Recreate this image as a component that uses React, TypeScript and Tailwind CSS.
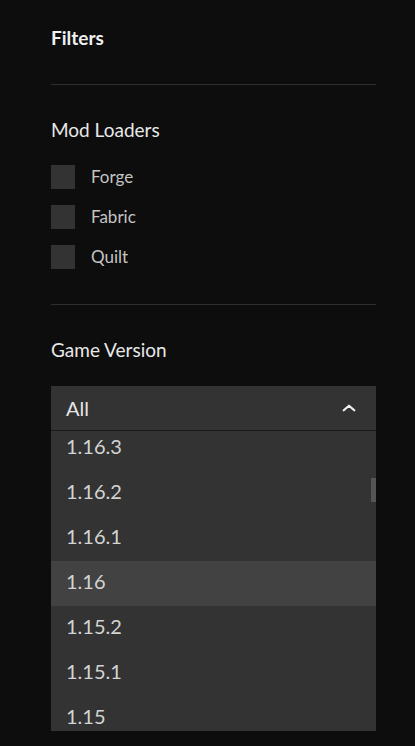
const LOADERS = ["Forge", "Fabric", "Quilt"];

const VERSIONS = ["1.16.3", "1.16.2", "1.16.1", "1.16", "1.15.2", "1.15.1", "1.15"];

export default function App() {
  return (
    <div
      className="min-h-[746px] w-full bg-[#0d0d0d] pl-[51px] pr-[39px] pt-[26px] text-[#e6e6e6]"
      style={{ fontFamily: "Lato, 'Open Sans', sans-serif" }}
    >
      <h2 className="text-[19px] font-bold leading-[24px] text-[#f0f0f0]">Filters</h2>

      <div className="mt-[34px] h-px w-full bg-[#2e2e2e]" />

      {/* Mod loaders */}
      <section className="pt-[33px] pb-[35px]">
        <h3 className="text-[19px] leading-[24px] text-[#e8e8e8]">Mod Loaders</h3>
        <div className="mt-[23px] flex flex-col gap-[16px]">
          {LOADERS.map((name) => (
            <label key={name} className="flex items-center gap-[16px]">
              <span className="h-[24px] w-[24px] bg-[#333333]" />
              <span className="text-[17px] leading-[24px] text-[#c4c4c4]">{name}</span>
            </label>
          ))}
        </div>
      </section>

      <div className="h-px w-full bg-[#2e2e2e]" />

      {/* Game version */}
      <section className="pt-[33px]">
        <h3 className="text-[19px] leading-[24px] text-[#e8e8e8]">Game Version</h3>
        <div className="mt-[24px]">
          <button
            type="button"
            className="flex h-[45px] w-full items-center justify-between border-b border-[#1c1c1c] bg-[#333333] pl-[15px] pr-[18px] text-left"
          >
            <span className="text-[20px] text-[#e6e6e6]">All</span>
            <svg viewBox="0 0 24 24" className="h-[18px] w-[18px] text-[#f0f0f0]" fill="none" stroke="currentColor" strokeWidth="3" strokeLinecap="round" strokeLinejoin="round">
              <path d="m5 15 7-6 7 6" />
            </svg>
          </button>
          <div className="relative h-[300px] overflow-hidden bg-[#333333]">
            <ul className="-mt-[5px]">
              {VERSIONS.map((v) => (
                <li
                  key={v}
                  className={`flex h-[45px] items-center pb-[5px] pl-[15px] text-[20px] text-[#d4d4d4] ${
                    v === "1.16" ? "bg-[#424242]" : ""
                  }`}
                >
                  {v}
                </li>
              ))}
            </ul>
            <div className="absolute right-0 top-[47px] h-[24px] w-[5px] bg-[#555555]" />
          </div>
        </div>
      </section>
    </div>
  );
}
